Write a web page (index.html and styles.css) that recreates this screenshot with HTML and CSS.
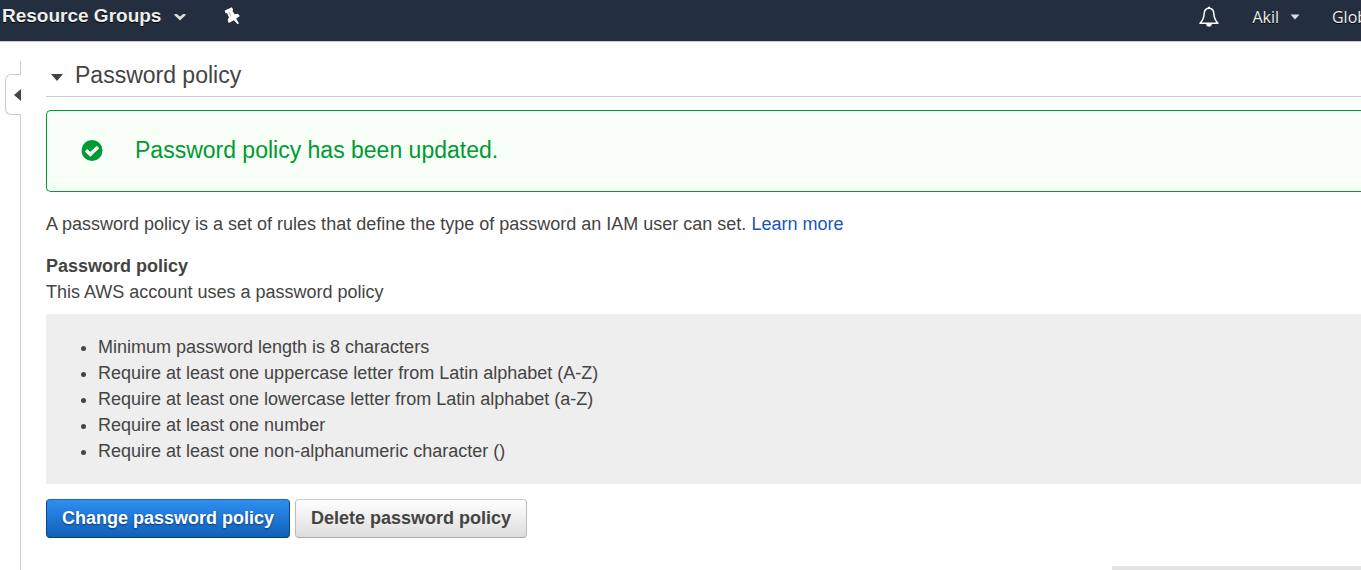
FILE: index.html
```html
<!DOCTYPE html>
<html lang="en">
<head>
<meta charset="utf-8">
<title>Password policy</title>
<link rel="stylesheet" href="styles.css">
</head>
<body>
<header class="topbar">
  <nav class="topbar-left">
    <button class="nav-item nav-groups" type="button">Resource Groups
      <svg class="chevron" viewBox="0 0 12 8" aria-hidden="true"><path d="M.5 1 H2.800 L6 3.600 L9.200 1 H11.500 V2.200 L6 7.500 L.5 2.200Z"/></svg>
    </button>
    <button class="nav-item nav-pin" type="button" aria-label="Pin shortcuts">
      <svg class="pin" viewBox="0 0 18 18" aria-hidden="true"><path fill="#fff" d="M1.800 3.600 L8.800 .3 L10 2.200 L9.600 4.200 L11.800 7.300 L14.800 6.800 L16.800 9 L13.200 11.700 L16 16.400 L14.400 17 L10.900 13.200 L5.800 16 L4.600 13 L6 10.500 L4.300 6.500 L2.300 5.900Z"/><path fill="none" stroke="#6b768b" stroke-width=".6" d="M6.100 5.200 L7.900 9.300"/></svg>
    </button>
  </nav>
  <nav class="topbar-right">
    <button class="nav-item nav-bell" type="button" aria-label="Notifications">
      <svg class="bell" viewBox="0 0 20 22" aria-hidden="true"><path fill="none" stroke="#fff" stroke-width="1.500" stroke-linejoin="round" d="M10 2.300 C6.300 2.300 5.300 5 5.100 8 C4.900 12 4 14.300 1 17.300 H19 C16 14.300 15.100 12 14.900 8 C14.700 5 13.700 2.300 10 2.300Z"/><path fill="#fff" d="M8.800 2.400 V1.300 Q10 -.2 11.200 1.300 V2.400Z M7 17.500 H13 Q12.500 20.800 10 20.800 Q7.500 20.800 7 17.500Z"/></svg>
    </button>
    <button class="nav-item nav-user" type="button">Akil
      <svg class="caret" viewBox="0 0 10 6" aria-hidden="true"><path d="M.5 .5 H9.500 L5 5.500Z"/></svg>
    </button>
    <button class="nav-item nav-region" type="button">Global</button>
  </nav>
</header>
<div class="layout">
  <aside class="rail">
    <button class="rail-toggle" type="button" aria-label="Show navigation">
      <svg class="rail-arrow" viewBox="0 0 7 12" aria-hidden="true"><path d="M7 0 V12 L0 6Z"/></svg>
    </button>
    <div class="rail-line"></div>
  </aside>
  <main class="content">
    <h1 class="section-title">
      <svg class="section-caret" viewBox="0 0 12 7" aria-hidden="true"><path d="M0 0 H12 L6 7Z"/></svg>
      Password policy
    </h1>
    <div class="alert" role="status">
      <svg class="alert-icon" viewBox="0 0 22 22" aria-hidden="true"><circle cx="11" cy="10.500" r="10.500" fill="#093"/><path d="M5 10.300 L9.300 14.300 L17 7" fill="none" stroke="#fff" stroke-width="3.400"/></svg>
      <span>Password policy has been updated.</span>
    </div>
    <p class="intro">A password policy is a set of rules that define the type of password an IAM user can set. <a class="link" href="#">Learn more</a></p>
    <h2 class="subtitle">Password policy</h2>
    <p class="summary">This AWS account uses a password policy</p>
    <ul class="rules">
      <li>Minimum password length is 8 characters</li>
      <li>Require at least one uppercase letter from Latin alphabet (A-Z)</li>
      <li>Require at least one lowercase letter from Latin alphabet (a-Z)</li>
      <li>Require at least one number</li>
      <li>Require at least one non-alphanumeric character ()</li>
    </ul>
    <div class="actions">
      <button class="button button-primary" type="button">Change password policy</button>
      <button class="button button-default" type="button">Delete password policy</button>
    </div>
  </main>
</div>
<div class="bottom-strip"></div>
</body>
</html>
```
FILE: styles.css
```css
* {
  box-sizing: border-box;
}

body {
  margin: 0;
  min-height: 100vh;
  display: flex;
  flex-direction: column;
  overflow: hidden;
  background: #fff;
  color: #444;
  font: 18px/26px "Liberation Sans", Arial, sans-serif;
}

button {
  font-family: inherit;
  cursor: pointer;
}

.topbar {
  display: flex;
  justify-content: space-between;
  height: 42px;
  overflow: hidden;
  background: #232f3e;
  border-bottom: 1px solid #c4c8cc;
}

.topbar-left,
.topbar-right {
  display: flex;
  align-items: flex-start;
}

.topbar-right {
  margin-right: -19px;
}

.nav-item {
  display: flex;
  align-items: center;
  padding: 0;
  border: 0;
  background: none;
  color: #eee;
  white-space: nowrap;
}

.nav-groups {
  gap: 13px;
  padding: 4px 0 0 2px;
  font-size: 19px;
  line-height: 24px;
  font-weight: bold;
  text-shadow: 0 1px 0 #000;
}

.chevron {
  width: 12px;
  height: 8px;
  margin-top: 2px;
  fill: #ddd;
}

.nav-pin {
  margin-left: 37px;
  padding-top: 7px;
}

.pin {
  width: 18px;
  height: 18px;
}

.nav-bell {
  padding-top: 6px;
}

.bell {
  width: 20px;
  height: 22px;
}

.nav-user,
.nav-region {
  padding-top: 5px;
  font: 16px/24px "Open Sans", "Noto Sans", sans-serif;
  text-shadow: 0 1px 0 #000;
}

.nav-user {
  gap: 11px;
  margin: 0 32px 0 33px;
}

.caret {
  width: 10px;
  height: 6px;
  fill: #ddd;
}

.layout {
  flex: 1;
  display: flex;
}

.rail {
  display: flex;
  flex-direction: column;
  align-items: flex-end;
  width: 21px;
  padding-top: 19px;
}

.rail::before {
  content: "";
  width: 1px;
  height: 13px;
  background: #ccc;
}

.rail-toggle {
  display: flex;
  align-items: center;
  justify-content: flex-end;
  width: 16px;
  height: 41px;
  padding: 0;
  border: 1px solid #ccc;
  border-right: 0;
  border-radius: 6px 0 0 6px;
  background: #fff;
}

.rail-arrow {
  width: 7px;
  height: 12px;
  fill: #444;
}

.rail-line {
  flex: 1;
  width: 1px;
  background: #ccc;
}

.content {
  flex: 1;
  min-width: 0;
  padding: 18px 0 32px 25px;
}

.section-title {
  display: flex;
  align-items: center;
  gap: 12px;
  margin: 0 0 13px;
  padding: 0 0 6px 5px;
  border-bottom: 1px solid #ccc;
  font-size: 23px;
  line-height: 30px;
  font-weight: normal;
}

.section-caret {
  width: 12px;
  height: 7px;
  margin-top: 4px;
  fill: #444;
}

.alert {
  display: flex;
  align-items: center;
  gap: 32px;
  margin-bottom: 19px;
  padding: 25px 34px 26px;
  border: 1px solid #093;
  border-right: 0;
  border-radius: 5px 0 0 5px;
  background: #f7fff7;
  color: #093;
  font-size: 23px;
  line-height: 29px;
}

.alert-icon {
  width: 22px;
  height: 22px;
}

.intro {
  margin: 0 0 16px;
}

.link {
  color: #1a55b8;
  text-decoration: none;
}

.subtitle {
  margin: 0;
  font-size: 18px;
  line-height: 26px;
}

.summary {
  margin: 0 0 9px;
}

.rules {
  margin: 0 0 15px;
  padding: 20px 16px 20px 52px;
  background: #eee;
}

.actions {
  display: flex;
  gap: 5px;
}

.button {
  height: 39px;
  padding: 0 15px 2px;
  border: 1px solid;
  border-radius: 4px;
  font-size: 18px;
  line-height: 26px;
  font-weight: bold;
}

.button-primary {
  border-color: #1a68b8 #0f4785 #0c3c72;
  background: linear-gradient(#2e8ef0, #1160b8);
  color: #fff;
  text-shadow: 0 1px 2px #0a3a70;
}

.button-default {
  border-color: #ccc #bbb #aaa;
  background: linear-gradient(#fff, #ddd);
  color: #444;
}

.bottom-strip {
  position: fixed;
  right: 0;
  bottom: 0;
  width: 249px;
  height: 4px;
  background: #e3e3e3;
}
```
